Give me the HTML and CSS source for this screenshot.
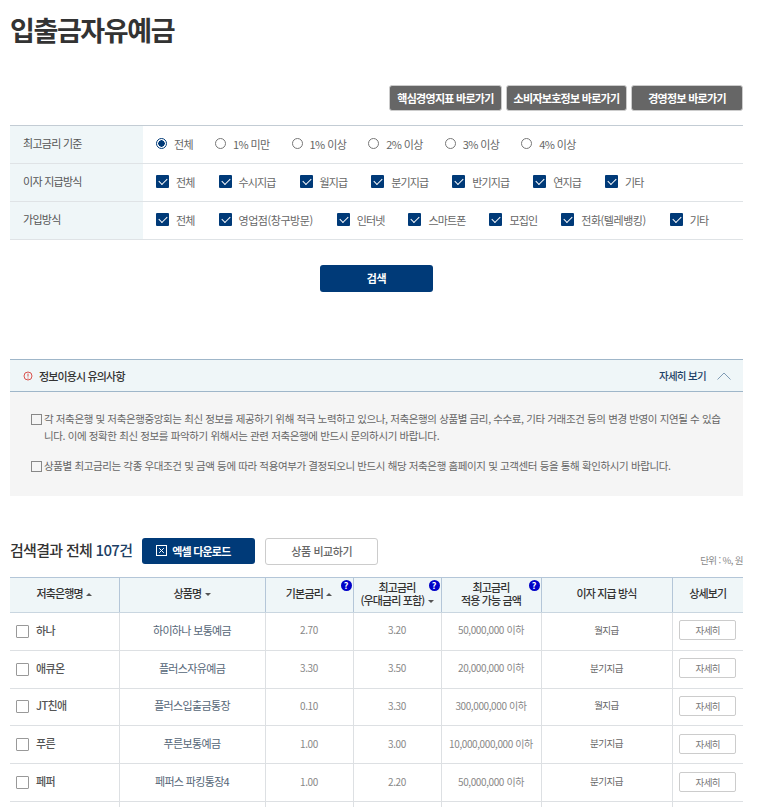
FILE: index.html
```html
<!DOCTYPE html>
<html lang="ko">
<head>
<meta charset="utf-8">
<title>입출금자유예금</title>
<link rel="stylesheet" href="styles.css">
</head>
<body>
<main class="page">
  <h1 class="title">입출금자유예금</h1>
  <div class="links">
    <a class="link-btn w1">핵심경영지표 바로가기</a>
    <a class="link-btn w2">소비자보호정보 바로가기</a>
    <a class="link-btn w3">경영정보 바로가기</a>
  </div>
  <section class="filters">
    <div class="f-row">
      <div class="f-label">최고금리 기준</div>
      <div class="f-opts radios">
        <label class="opt"><i class="radio on"></i>전체</label>
        <label class="opt"><i class="radio"></i>1% 미만</label>
        <label class="opt"><i class="radio"></i>1% 이상</label>
        <label class="opt"><i class="radio"></i>2% 이상</label>
        <label class="opt"><i class="radio"></i>3% 이상</label>
        <label class="opt"><i class="radio"></i>4% 이상</label>
      </div>
    </div>
    <div class="f-row">
      <div class="f-label">이자 지급방식</div>
      <div class="f-opts">
        <label class="opt"><i class="check"></i>전체</label>
        <label class="opt"><i class="check"></i>수시지급</label>
        <label class="opt"><i class="check"></i>월지급</label>
        <label class="opt"><i class="check"></i>분기지급</label>
        <label class="opt"><i class="check"></i>반기지급</label>
        <label class="opt"><i class="check"></i>연지급</label>
        <label class="opt"><i class="check"></i>기타</label>
      </div>
    </div>
    <div class="f-row">
      <div class="f-label">가입방식</div>
      <div class="f-opts">
        <label class="opt"><i class="check"></i>전체</label>
        <label class="opt paren"><i class="check"></i>영업점(창구방문)</label>
        <label class="opt"><i class="check"></i>인터넷</label>
        <label class="opt"><i class="check"></i>스마트폰</label>
        <label class="opt"><i class="check"></i>모집인</label>
        <label class="opt paren"><i class="check"></i>전화(텔레뱅킹)</label>
        <label class="opt"><i class="check"></i>기타</label>
      </div>
    </div>
  </section>
  <div class="search-wrap"><button class="search">검색</button></div>
  <section class="notice">
    <header class="n-head">
      <svg class="n-icon" width="10" height="10" viewBox="0 0 10 10"><circle cx="5" cy="5" r="4" fill="none" stroke="#d9534f" stroke-width="1"/><path d="M5 2.6V5.6M5 6.6V7.6" stroke="#d9534f" stroke-width="1"/></svg>
      <strong class="n-title">정보이용시 유의사항</strong>
      <span class="n-more">자세히 보기</span>
      <svg class="n-chev" width="14" height="8" viewBox="0 0 14 8"><path d="M0.5 7.5L7 1L13.5 7.5" fill="none" stroke="#7f9bb5" stroke-width="1"/></svg>
    </header>
    <div class="n-body">
      <p class="n-item">각 저축은행 및 저축은행중앙회는 최신 정보를 제공하기 위해 적극 노력하고 있으나, 저축은행의 상품별 금리, 수수료, 기타 거래조건 등의 변경 반영이 지연될 수 있습니다. 이에 정확한 최신 정보를 파악하기 위해서는 관련 저축은행에 반드시 문의하시기 바랍니다.</p>
      <p class="n-item">상품별 최고금리는 각종 우대조건 및 금액 등에 따라 적용여부가 결정되오니 반드시 해당 저축은행 홈페이지 및 고객센터 등을 통해 확인하시기 바랍니다.</p>
    </div>
  </section>
  <div class="r-head">
    <h2 class="r-title">검색결과 전체 <b>107건</b></h2>
    <button class="excel"><svg class="x-icon" width="11" height="11" viewBox="0 0 11 11"><rect x="0.5" y="0.5" width="10" height="10" fill="none" stroke="#fff"/><path d="M3.2 3.2L7.8 7.8M7.8 3.2L3.2 7.8" stroke="#fff"/></svg>엑셀 다운로드</button>
    <button class="compare">상품 비교하기</button>
    <span class="unit">단위 : %, 원</span>
  </div>
  <table class="results">
    <colgroup><col class="c1"><col class="c2"><col class="c3"><col class="c4"><col class="c5"><col class="c6"><col class="c7"></colgroup>
    <thead>
      <tr>
        <th>저축은행명 <i class="sort up"></i></th>
        <th>상품명 <i class="sort down"></i></th>
        <th><span class="ln">기본금리 <i class="sort up"></i></span><i class="help">?</i></th>
        <th><span class="ln">최고금리</span><span class="ln">(우대금리 포함) <i class="sort down"></i></span><i class="help">?</i></th>
        <th><span class="ln">최고금리</span><span class="ln">적용 가능 금액</span><i class="help">?</i></th>
        <th>이자 지급 방식</th>
        <th>상세보기</th>
      </tr>
    </thead>
    <tbody>
      <tr><td class="bank"><i class="box"></i>하나</td><td class="prod">하이하나 보통예금</td><td class="num">2.70</td><td class="num">3.20</td><td class="num">50,000,000 이하</td><td class="pay">월지급</td><td class="act"><a class="detail">자세히</a></td></tr>
      <tr><td class="bank"><i class="box"></i>애큐온</td><td class="prod">플러스자유예금</td><td class="num">3.30</td><td class="num">3.50</td><td class="num">20,000,000 이하</td><td class="pay">분기지급</td><td class="act"><a class="detail">자세히</a></td></tr>
      <tr><td class="bank"><i class="box"></i>JT친애</td><td class="prod">플러스입출금통장</td><td class="num">0.10</td><td class="num">3.30</td><td class="num">300,000,000 이하</td><td class="pay">월지급</td><td class="act"><a class="detail">자세히</a></td></tr>
      <tr><td class="bank"><i class="box"></i>푸른</td><td class="prod">푸른보통예금</td><td class="num">1.00</td><td class="num">3.00</td><td class="num">10,000,000,000 이하</td><td class="pay">분기지급</td><td class="act"><a class="detail">자세히</a></td></tr>
      <tr><td class="bank"><i class="box"></i>페퍼</td><td class="prod">페퍼스 파킹통장4</td><td class="num">1.00</td><td class="num">2.20</td><td class="num">50,000,000 이하</td><td class="pay">분기지급</td><td class="act"><a class="detail">자세히</a></td></tr>
      <tr><td></td><td></td><td></td><td></td><td></td><td></td><td></td></tr>
    </tbody>
  </table>
</main>
</body>
</html>
```

FILE: styles.css
```css
* { box-sizing: border-box; }
html, body { margin: 0; height: 807px; overflow: hidden; background: #fff; }
body { font-family: "Noto Sans CJK KR", "Noto Sans", sans-serif; font-size: 11px; color: #555; letter-spacing: -0.6px; }
.page { width: 733px; margin-left: 10px; }
.title { margin: 0; height: 85px; padding-top: 10px; font-size: 27px; line-height: 40px; font-weight: 700; color: #333; letter-spacing: -1.4px; }

.links { display: flex; justify-content: flex-end; gap: 4px; height: 40px; }
.link-btn { height: 26px; padding-bottom: 1px; display: flex; align-items: center; justify-content: center; background: #666; border: 1px solid #ccc; border-radius: 3px; color: #fff; font-size: 11px; font-weight: 700; letter-spacing: -0.72px; }
.w1 { width: 113px; }
.w2 { width: 121px; }
.w3 { width: 112px; }

.filters { border-top: 1px solid #c3ccd4; }
.f-row { display: flex; height: 38px; border-bottom: 1px solid #dfe3e6; }
.f-label { width: 133px; padding-left: 13px; line-height: 34px; background: #eff6f8; color: #555; letter-spacing: -0.72px; }
.f-opts { display: flex; align-items: center; gap: 24px; padding: 0 0 2px 13px; letter-spacing: -0.87px; }
.radios { gap: 22px; letter-spacing: -0.6px; }
.opt { display: flex; align-items: center; color: #666; }
.paren { letter-spacing: -0.45px; }
.radio { width: 11px; height: 11px; margin-right: 7px; border: 1px solid #777; border-radius: 50%; background: #fff; }
.radio.on { border-color: #003a78; background: radial-gradient(circle, #003a78 0 3px, #fff 3.4px); }
.check { position: relative; width: 13px; height: 13px; margin-right: 7px; background: #003a78; border-radius: 1px; }
.check::after { content: ""; position: absolute; left: 3px; top: 2.5px; width: 7px; height: 4px; border-left: 1.5px solid #fff; border-bottom: 1.5px solid #fff; transform: rotate(-45deg); }

.search-wrap { display: flex; justify-content: center; padding-top: 25px; height: 119px; }
.search { width: 113px; height: 27px; padding: 0 0 2px; border: 0; border-radius: 3px; background: #003a78; color: #fff; font: 700 11px "Noto Sans CJK KR", sans-serif; letter-spacing: -0.4px; }

.notice { background: #f5f5f5; }
.n-head { display: flex; align-items: center; height: 33px; padding: 0 12px 0 13px; background: #eff6f8; border-top: 1px solid #9fb6c9; border-bottom: 1px solid #9fb6c9; }
.n-icon { margin-right: 6px; }
.n-title { flex: 1; color: #333; font-size: 11px; font-weight: 500; letter-spacing: -0.85px; }
.n-more { margin-right: 11px; color: #1d3f66; font-weight: 500; font-size: 10.5px; letter-spacing: -0.7px; }
.n-body { height: 104px; padding: 18px 20px 0 21px; }
.n-item { position: relative; margin: 0 0 13px; padding-left: 13px; line-height: 17px; color: #666; font-size: 10.5px; letter-spacing: -0.38px; }
.n-item::before { content: ""; position: absolute; left: 0; top: 4px; width: 9px; height: 9px; border: 1px solid #888; }

.r-head { position: relative; display: flex; align-items: center; height: 81px; padding-top: 38px; padding-bottom: 9px; }
.r-title { margin: 0 10px 0 0; padding-bottom: 3px; font-size: 15px; font-weight: 500; color: #333; letter-spacing: -0.7px; }
.r-title b { font-weight: 500; color: #1d3f66; }
.excel { display: flex; align-items: center; width: 113px; height: 26px; margin-right: 10px; padding: 0 0 1px 14px; border: 0; border-radius: 3px; background: #003a78; color: #fff; font: 700 11px "Noto Sans CJK KR", sans-serif; letter-spacing: -0.8px; }
.x-icon { margin-right: 5px; }
.compare { width: 113px; height: 27px; border: 1px solid #ccc; border-radius: 3px; background: #fff; color: #666; font: 500 11px "Noto Sans CJK KR", sans-serif; letter-spacing: -0.4px; }
.unit { position: absolute; right: 0; top: 57px; font-size: 9.5px; color: #888; }

.results { width: 733px; table-layout: fixed; border-collapse: collapse; }
.c1 { width: 109px; }
.c2 { width: 146px; }
.c3 { width: 88px; }
.c4 { width: 88px; }
.c5 { width: 100px; }
.c6 { width: 131px; }
.c7 { width: 71px; }
.results th { position: relative; height: 35px; padding: 0 0 2px; background: #eff6f8; border-top: 1px solid #b4c6d8; border-bottom: 1px solid #c9d6e0; border-left: 1px solid #b4c6d8; color: #333; font-size: 11px; line-height: 13.5px; font-weight: 500; letter-spacing: -0.85px; }
.results th:first-child { border-left: 0; }
.ln { display: block; }
.results td { height: 37.8px; padding: 0 0 3px; text-align: center; border-bottom: 1px solid #dde0e3; border-left: 1px solid #dde0e3; color: #666; }
.results td:first-child { border-left: 0; }
.results td.act { padding-bottom: 2px; }
.sort { display: inline-block; width: 0; height: 0; margin-left: 1px; border-left: 3.5px solid transparent; border-right: 3.5px solid transparent; vertical-align: 2px; }
.sort.up { border-bottom: 3.5px solid #555; }
.sort.down { border-top: 3.5px solid #555; }
.help { position: absolute; top: 2px; right: 1px; width: 11px; height: 11px; border-radius: 50%; background: #0000c8; color: #fff; font-size: 9px; font-style: normal; font-weight: 700; line-height: 11px; text-align: center; letter-spacing: 0; }
.results td.bank { padding-left: 6px; text-align: left; color: #555; font-weight: 500; }
.box { display: inline-block; width: 13px; height: 13px; margin-right: 7px; border: 1px solid #999; border-radius: 1px; background: #fff; vertical-align: -3px; }
.results td.prod { color: #567; letter-spacing: -0.66px; }
.results td.num { color: #888; font-size: 10px; letter-spacing: -0.4px; }
.results td.pay { font-size: 9.5px; letter-spacing: -0.5px; }
.detail { display: block; width: 57px; height: 20px; margin: 0 auto; border: 1px solid #ccc; border-radius: 2px; background: #fff; color: #777; font-size: 9.5px; line-height: 18px; }
```
